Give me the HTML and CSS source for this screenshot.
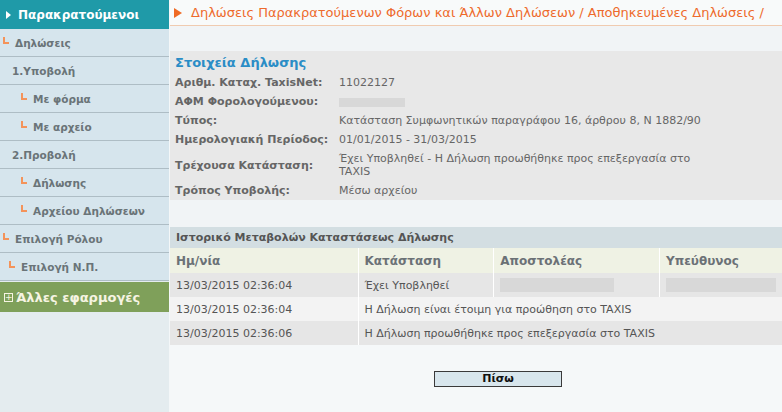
FILE: index.html
```html
<!DOCTYPE html>
<html lang="el">

<head>
    <meta charset="UTF-8">
    <meta name="viewport" content="width=device-width, initial-scale=1.0">
    <title>Αποθηκευμένες Δηλώσεις</title>
    <link rel="stylesheet" href="styles.css">
</head>

<body>
    <div class="page">
        <nav class="sidebar">
            <div class="sideHead"><span class="whiteArrow"></span>Παρακρατούμενοι</div>
            <a class="navItem lvl0" href="#"><span class="corner"></span>Δηλώσεις</a>
            <a class="navItem lvlGroup" href="#">1.Υποβολή</a>
            <a class="navItem lvl2" href="#"><span class="corner"></span>Με φόρμα</a>
            <a class="navItem lvl2" href="#"><span class="corner"></span>Με αρχείο</a>
            <a class="navItem lvlGroup" href="#">2.Προβολή</a>
            <a class="navItem lvl2" href="#"><span class="corner"></span>Δήλωσης</a>
            <a class="navItem lvl2" href="#"><span class="corner"></span>Αρχείου Δηλώσεων</a>
            <a class="navItem lvl0" href="#"><span class="corner"></span>Επιλογή Ρόλου</a>
            <a class="navItem lvl1" href="#"><span class="corner"></span>Επιλογή Ν.Π.</a>
            <div class="otherApps"><span class="plusBox">+</span>Άλλες εφαρμογές</div>
        </nav>

        <main class="content">
            <div class="pageTitle">
                <span class="orangeArrow"></span>
                Δηλώσεις Παρακρατούμενων Φόρων και Άλλων Δηλώσεων / Αποθηκευμένες Δηλώσεις /
            </div>
            <div class="spacer"></div>

            <section class="details">
                <h2>Στοιχεία Δήλωσης</h2>
                <div class="detailRow">
                    <span class="label">Αριθμ. Καταχ. TaxisNet:</span>
                    <span class="value">11022127</span>
                </div>
                <div class="detailRow">
                    <span class="label">ΑΦΜ Φορολογούμενου:</span>
                    <span class="value"><span class="blur afm"></span></span>
                </div>
                <div class="detailRow">
                    <span class="label">Τύπος:</span>
                    <span class="value">Κατάσταση Συμφωνητικών παραγράφου 16, άρθρου 8, Ν 1882/90</span>
                </div>
                <div class="detailRow">
                    <span class="label">Ημερολογιακή Περίοδος:</span>
                    <span class="value">01/01/2015 - 31/03/2015</span>
                </div>
                <div class="detailRow tall">
                    <span class="label">Τρέχουσα Κατάσταση:</span>
                    <span class="value">Έχει Υποβληθεί - Η Δήλωση προωθήθηκε προς επεξεργασία στο TAXIS</span>
                </div>
                <div class="detailRow">
                    <span class="label">Τρόπος Υποβολής:</span>
                    <span class="value">Μέσω αρχείου</span>
                </div>
            </section>

            <div class="spacer gap"></div>

            <section class="history">
                <div class="historyTitle">Ιστορικό Μεταβολών Καταστάσεως Δήλωσης</div>
                <table class="historyTable">
                    <thead>
                        <tr>
                            <th class="colDate">Ημ/νία</th>
                            <th class="colState">Κατάσταση</th>
                            <th class="colSender">Αποστολέας</th>
                            <th>Υπεύθυνος</th>
                        </tr>
                    </thead>
                    <tbody>
                        <tr class="odd">
                            <td>13/03/2015 02:36:04</td>
                            <td>Έχει Υποβληθεί</td>
                            <td><span class="blur sender"></span></td>
                            <td><span class="blur owner"></span></td>
                        </tr>
                        <tr>
                            <td>13/03/2015 02:36:04</td>
                            <td colspan="3">Η Δήλωση είναι έτοιμη για προώθηση στο TAXIS</td>
                        </tr>
                        <tr class="odd">
                            <td>13/03/2015 02:36:06</td>
                            <td colspan="3">Η Δήλωση προωθήθηκε προς επεξεργασία στο TAXIS</td>
                        </tr>
                    </tbody>
                </table>
            </section>

            <div class="actions">
                <button class="backBtn" type="button">Πίσω</button>
            </div>
        </main>
    </div>
</body>

</html>
```

FILE: styles.css
```css
html,
body {
    margin: 0;
    height: 100%;
}

body {
    font-family: "DejaVu Sans", Verdana, sans-serif;
    font-size: 11px;
    color: #555;
    background-color: #f5f8f9;
}

.page {
    display: flex;
    height: 100%;
}

/* Left menu */
.sidebar {
    width: 169px;
    flex-shrink: 0;
    background-color: #e4ecef;
    border-right: 1px solid #f4f7f8;
    display: flex;
    flex-direction: column;
}

.sideHead {
    height: 29px;
    background-color: #1f9aa8;
    color: #fff;
    font-weight: bold;
    font-size: 12px;
    display: flex;
    align-items: center;
    padding-left: 6px;
}

.whiteArrow {
    width: 0;
    height: 0;
    border-top: 4px solid transparent;
    border-bottom: 4px solid transparent;
    border-left: 5px solid #fff;
    margin-right: 7px;
}

.navItem {
    height: 27px;
    border-bottom: 1px solid #aebdc5;
    background-color: #d6e5ed;
    color: #6a7478;
    font-weight: bold;
    font-size: 10.5px;
    text-decoration: none;
    display: flex;
    align-items: center;
}

.lvl0 {
    padding-left: 3px;
}

.lvl1 {
    padding-left: 9px;
}

.lvl2 {
    padding-left: 21px;
}

.lvlGroup {
    padding-left: 12px;
}

.corner {
    width: 4px;
    height: 5px;
    border-left: 2px solid #f4935a;
    border-bottom: 2px solid #f4935a;
    margin-right: 6px;
    margin-top: -4px;
}

.otherApps {
    height: 30px;
    margin-top: 1px;
    background-color: #7fa05a;
    color: #f6f4e2;
    font-weight: bold;
    font-size: 13px;
    display: flex;
    align-items: center;
    padding-left: 4px;
}

.plusBox {
    width: 7px;
    height: 7px;
    border: 1px solid #f6f4e2;
    font-size: 9px;
    line-height: 7px;
    text-align: center;
    margin-right: 3px;
    font-weight: normal;
}

/* Main area */
.content {
    flex: 1;
    display: flex;
    flex-direction: column;
}

.pageTitle {
    height: 25px;
    border-bottom: 1px solid #f0cbb0;
    background-color: #f8fafa;
    color: #ee6a2c;
    font-size: 13px;
    display: flex;
    align-items: center;
    padding-left: 4px;
    white-space: nowrap;
}

.orangeArrow {
    width: 0;
    height: 0;
    border-top: 5px solid transparent;
    border-bottom: 5px solid transparent;
    border-left: 8px solid #ef6a24;
    margin-right: 9px;
}

.spacer {
    height: 25px;
    background-color: #f1f4f6;
}

.spacer.gap {
    height: 27px;
}

.details {
    background-color: #e8e8e8;
    padding: 2px 5px 0;
}

.details h2 {
    margin: 0;
    height: 20px;
    line-height: 20px;
    font-size: 13px;
    color: #2a8dc6;
}

.detailRow {
    display: flex;
    min-height: 19px;
    align-items: center;
}

.detailRow.tall {
    min-height: 32px;
}

.label {
    width: 164px;
    flex-shrink: 0;
    font-weight: bold;
    color: #666;
}

.value {
    color: #666;
    line-height: 13px;
    max-width: 380px;
}

.blur {
    display: inline-block;
    background-color: #d8d8d8;
    vertical-align: middle;
}

.afm {
    width: 66px;
    height: 9px;
}

.sender {
    width: 114px;
    height: 14px;
}

.owner {
    width: 110px;
    height: 14px;
}

/* History table */
.historyTitle {
    height: 21px;
    line-height: 22px;
    background-color: #d3dee2;
    color: #555;
    font-weight: bold;
    font-size: 11px;
    padding-left: 6px;
}

.historyTable {
    width: 100%;
    border-collapse: collapse;
}

.historyTable th {
    height: 25px;
    background-color: #eff2e4;
    color: #6b7176;
    font-weight: bold;
    font-size: 12px;
    text-align: left;
    padding: 0 6px;
    border-left: 1px solid #fff;
}

.historyTable td {
    height: 24px;
    padding: 0 6px;
    color: #555;
    background-color: #f3f3f3;
    border-left: 1px solid #fff;
    white-space: nowrap;
}

.historyTable th:first-child,
.historyTable td:first-child {
    border-left: none;
}

.historyTable tr.odd td {
    background-color: #e6e6e6;
}

.colDate {
    width: 176px;
}

.colState {
    width: 123px;
}

.colSender {
    width: 153px;
}

/* Back button */
.actions {
    display: flex;
    justify-content: center;
    padding-top: 26px;
    padding-left: 44px;
}

.backBtn {
    width: 128px;
    height: 16px;
    padding: 0;
    border: 1px solid #3a3a3a;
    background-color: #d8e6ed;
    color: #111;
    font-family: inherit;
    font-size: 11px;
    font-weight: bold;
    line-height: 14px;
}
```
